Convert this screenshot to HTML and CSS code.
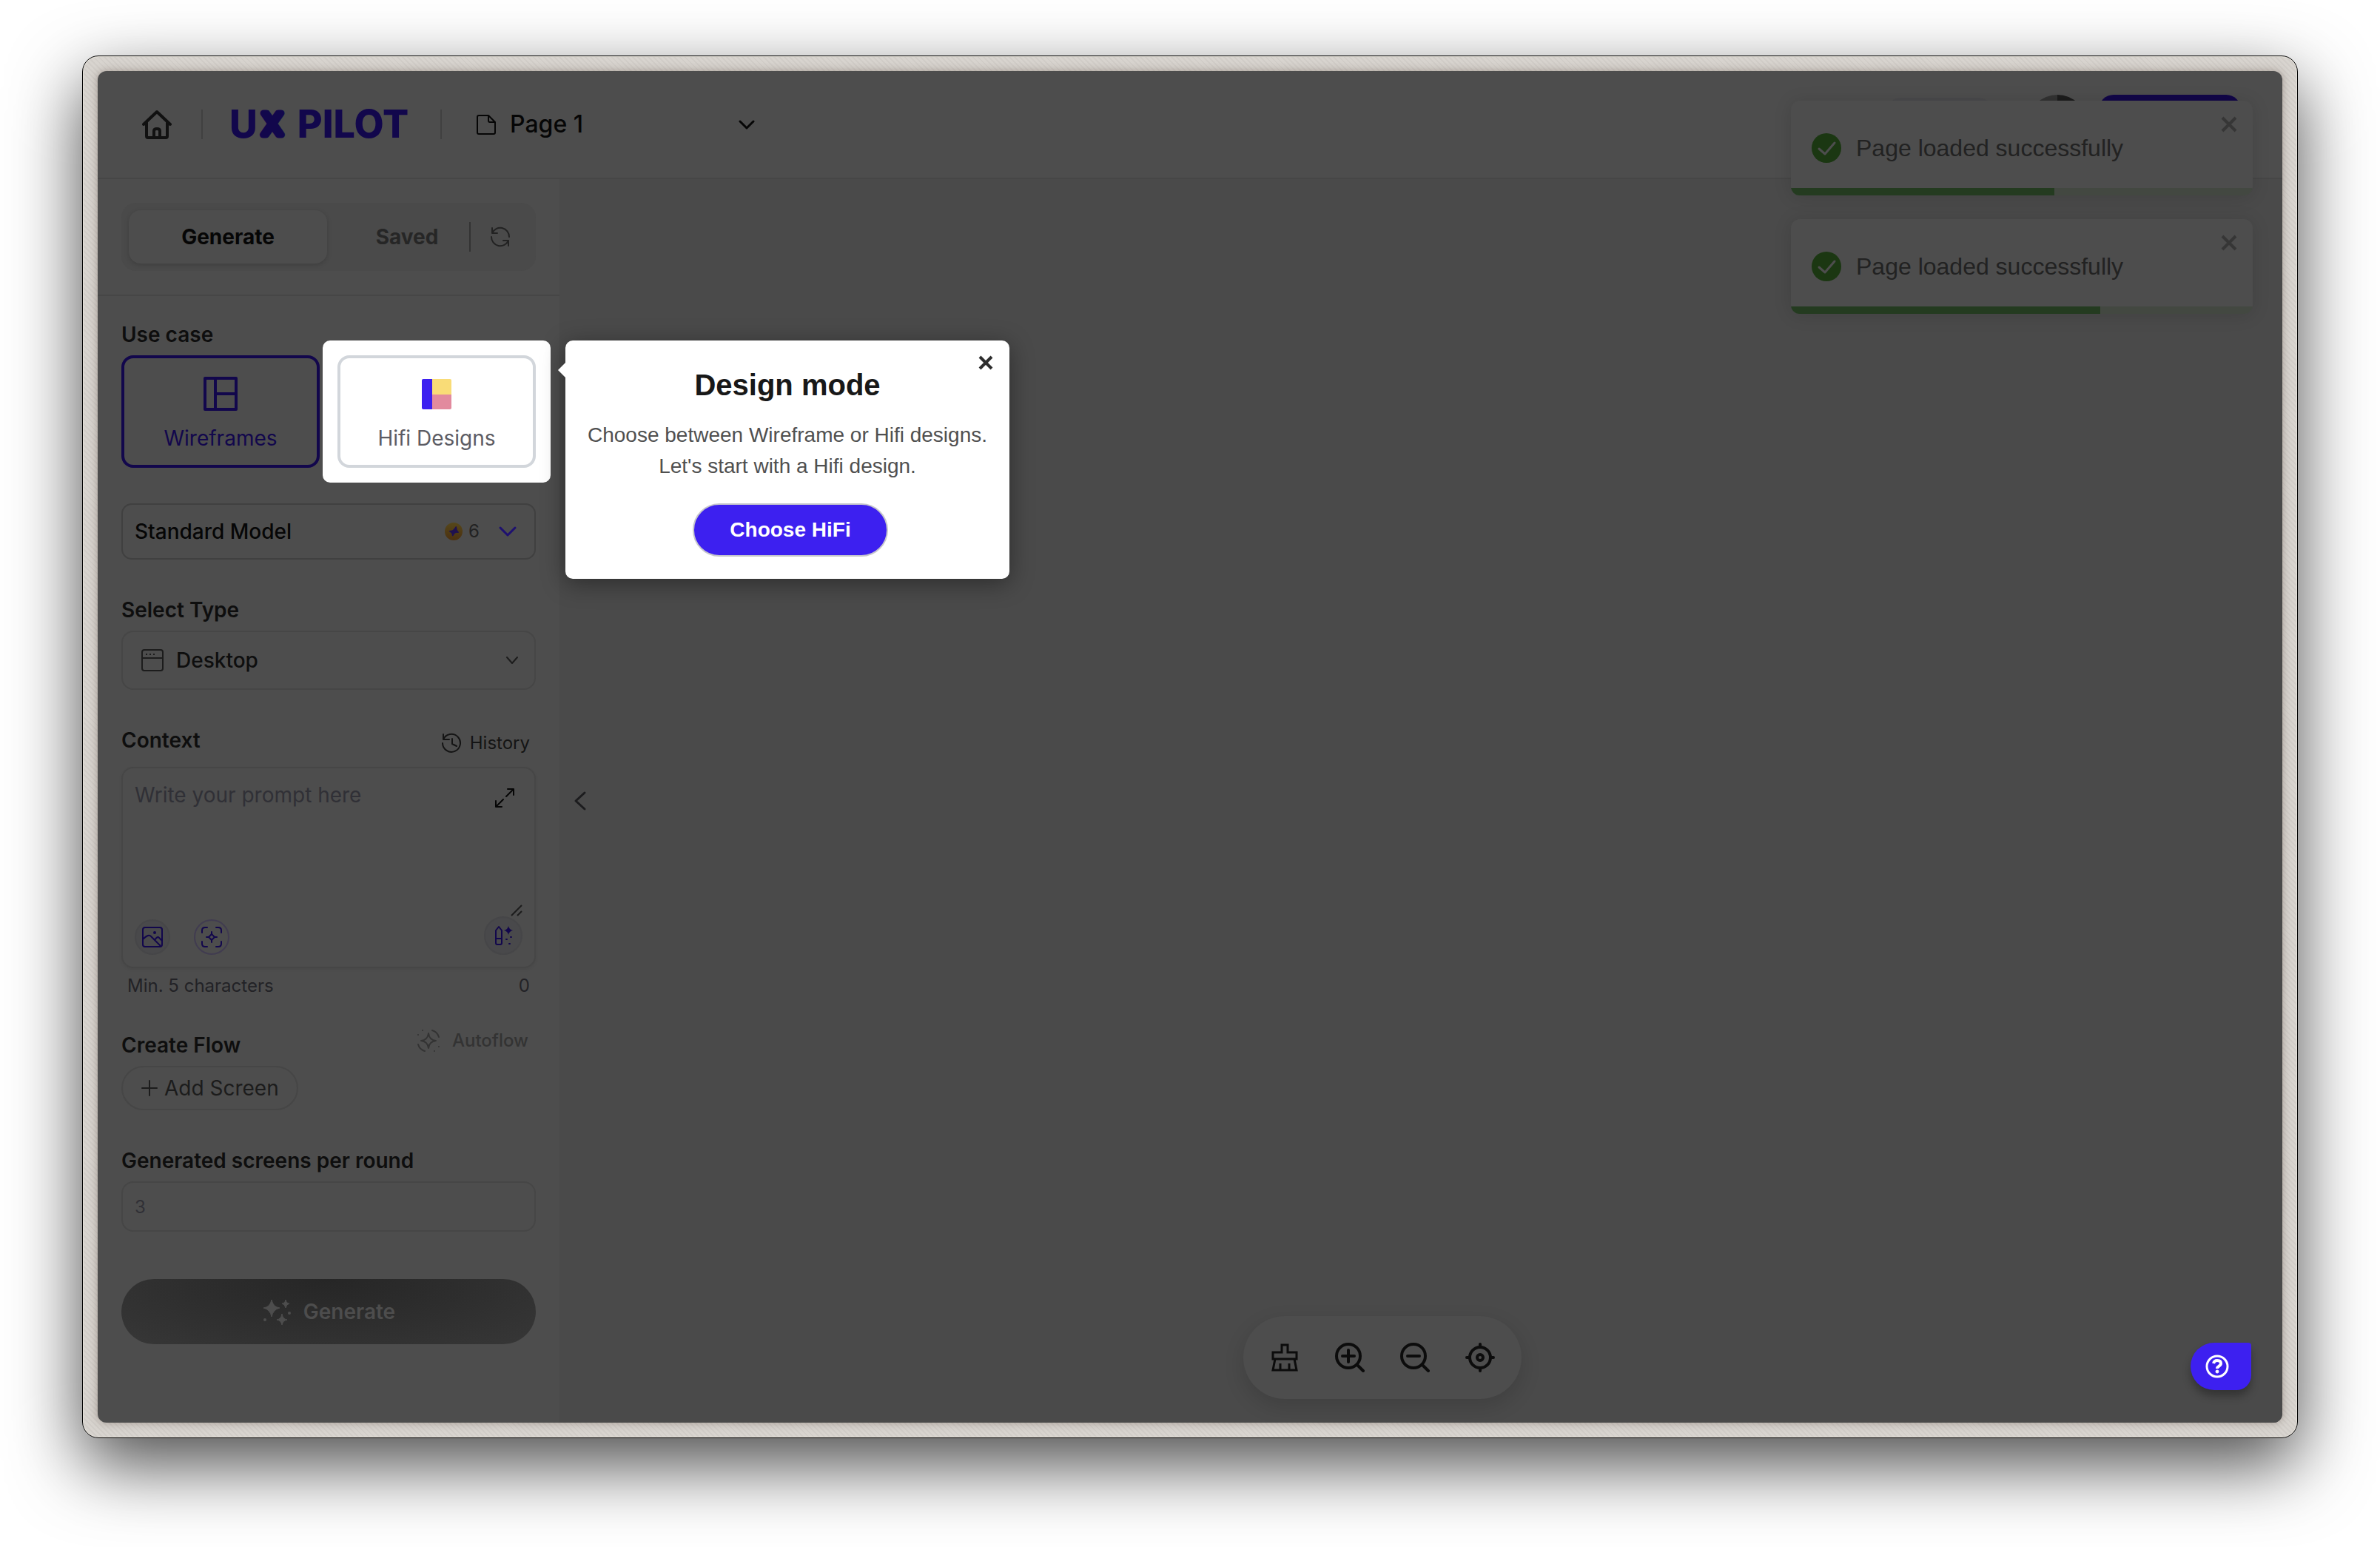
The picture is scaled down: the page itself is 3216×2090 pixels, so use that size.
FILE: index.html
```html
<!DOCTYPE html>
<html lang="en">
<head>
<meta charset="utf-8">
<title>UX Pilot</title>
<link rel="stylesheet" href="styles.css">
</head>
<body>
<div class="frame">
<div class="app">
  <header class="topbar">
    <a class="home" href="#" aria-label="Home">
      <svg width="40" height="40" viewBox="0 0 40 40" fill="none" stroke="currentColor" stroke-width="4" stroke-linejoin="round" stroke-linecap="round"><path d="M2 20 20 3l18 17M6 17v19q0 2 2 2h24q2 0 2-2V17M16 38V29q0-3 4-3t4 3v9"/></svg>
    </a>
    <span class="rule"></span>
    <a class="logo" href="#"><span>U</span><svg width="40" height="56" viewBox="0 0 40 56"><text class="logo-x" x="20" y="42" text-anchor="middle">X</text></svg><span class="logo-name">PILOT</span></a>
    <span class="rule"></span>
    <div class="page-picker">
      <svg width="32" height="32" viewBox="0 0 32 32" fill="none" stroke="currentColor" stroke-width="2" stroke-linejoin="round"><path d="M6 4h13l9 9v14q0 2-2 2H6q-2 0-2-2V6q0-2 2-2zM19 4v7q0 2 2 2h7"/></svg>
      <select aria-label="Page"><option>Page 1</option></select>
      <svg width="24" height="24" viewBox="0 0 24 24" fill="none" stroke="currentColor" stroke-width="3" stroke-linecap="round" stroke-linejoin="round"><path d="m3 8 9 9 9-9"/></svg>
    </div>
    <div class="account">
      <button class="credits" aria-label="Credits"></button>
      <span class="avatar"></span>
      <button class="upgrade" aria-label="Upgrade"></button>
    </div>
  </header>

  <div class="body">
    <aside class="sidebar">
      <div class="tabs-area">
        <div class="tabs">
          <button class="tab active">Generate</button>
          <button class="tab">Saved</button>
          <span class="tab-rule"></span>
          <button class="refresh" aria-label="Refresh">
            <svg width="28" height="28" viewBox="0 0 28 28" fill="none" stroke="currentColor" stroke-width="2" stroke-linecap="round" stroke-linejoin="round"><path d="M3 2v7h7M3 9A12 12 0 0 1 26 14M25 26v-7h-7M25 19A12 12 0 0 1 2 14"/></svg>
          </button>
        </div>
      </div>

      <form class="form">
        <section class="field">
          <h2 class="label">Use case</h2>
          <div class="modes">
            <button type="button" class="mode selected">
              <svg width="48" height="48" viewBox="0 0 48 48" fill="none" stroke="currentColor" stroke-width="4"><path d="M3 3h42v42H3zM17 3v42M17 24h28" stroke-linejoin="round"/></svg>
              Wireframes
            </button>
            <div class="spot">
              <button type="button" class="mode">
                <svg width="48" height="48" viewBox="0 0 48 48"><path fill="#3d20f0" d="M6 4h12v41H6q-2 0-2-2V6q0-2 2-2z"/><path fill="#f9dc77" d="M18 4h24q2 0 2 2v19H18z"/><path fill="#e28a9e" d="M18 25h26v18q0 2-2 2H18z"/></svg>
                Hifi Designs
              </button>
              <div class="popover" role="dialog" aria-labelledby="tour-title">
                <button type="button" class="popover-close" aria-label="Close"><svg width="20" height="20" viewBox="0 0 20 20" fill="none" stroke="currentColor" stroke-width="4"><path d="m2 2 16 16M18 2 2 18"/></svg></button>
                <h3 id="tour-title">Design mode</h3>
                <p>Choose between Wireframe or Hifi designs. Let's start with a Hifi design.</p>
                <button type="button" class="choose">Choose HiFi</button>
              </div>
            </div>
          </div>
        </section>

        <div class="picker model">
          <select aria-label="Model"><option>Standard Model</option></select>
          <span class="cost">
            <svg width="24" height="24" viewBox="0 0 24 24"><defs><linearGradient id="coin" x1="0" y1="0" x2="0" y2="1"><stop offset="0" stop-color="#55471a"/><stop offset="1" stop-color="#4c3010"/></linearGradient></defs><circle cx="12" cy="12" r="12" fill="url(#coin)"/><path fill="#1f1150" d="M15 5q1 0 1 1 0 4 3 7 0 1-1 1-4-1-6 3-1 2-2 1 0-4-4-6-1-1 0-1 3 0 5-1 2-2 4-5z"/></svg>
            6
          </span>
          <svg class="accent" width="28" height="28" viewBox="0 0 28 28" fill="none" stroke="currentColor" stroke-width="3" stroke-linecap="round" stroke-linejoin="round"><path d="m4 9 10 10L24 9"/></svg>
        </div>

        <div class="field">
          <label class="label" for="type">Select Type</label>
          <div class="picker type">
            <svg width="32" height="32" viewBox="0 0 32 32" fill="none" stroke="currentColor" stroke-width="2"><rect x="2" y="2" width="28" height="28" rx="3"/><path d="M2 13h28"/><path d="M7 8h2m3 0h2m3 0h2"/></svg>
            <select id="type"><option>Desktop</option></select>
            <svg width="20" height="20" viewBox="0 0 20 20" fill="none" stroke="currentColor" stroke-width="2" stroke-linecap="round" stroke-linejoin="round"><path d="m3 6 7 8 7-8"/></svg>
          </div>
        </div>

        <div class="field context">
          <div class="row bottom">
            <label class="label" for="prompt">Context</label>
            <button type="button" class="small-btn history">
              <svg width="28" height="28" viewBox="0 0 28 28" fill="none" stroke="currentColor" stroke-width="2" stroke-linecap="round" stroke-linejoin="round"><path d="M2 2v7h8M2 9a12 12 0 1 1-1 5M14 8v7l6 3"/></svg>
              History
            </button>
          </div>
          <div class="prompt">
            <div class="prompt-top">
              <textarea id="prompt" placeholder="Write your prompt here"></textarea>
              <div class="prompt-side">
                <button type="button" class="expand" aria-label="Expand"><svg width="28" height="28" viewBox="0 0 28 28" fill="none" stroke="currentColor" stroke-width="2" stroke-linecap="round" stroke-linejoin="round"><path d="M18 2h8v8M26 2 16 12M10 26H2v-8M2 26l10-10"/></svg></button>
                <svg width="16" height="16" viewBox="0 0 16 16" stroke="#1c1c1c" stroke-width="2"><path d="M1 15 15 1M9 15l6-6"/></svg>
              </div>
            </div>
            <div class="prompt-tools">
              <button type="button" class="round" aria-label="Add image"><svg width="28" height="28" viewBox="0 0 28 28" fill="none" stroke="currentColor" stroke-width="2" stroke-linejoin="round"><rect x="1" y="1" width="26" height="26" rx="3"/><path d="M1 17q8-8 11-4l13 13M17 18q4-6 6-3l4 4"/><circle cx="17" cy="8" r="1"/></svg></button>
              <button type="button" class="round outlined" aria-label="Scan"><svg width="28" height="28" viewBox="0 0 28 28" fill="none" stroke="currentColor" stroke-width="2" stroke-linecap="round"><path d="M1 8V5q0-4 4-4h3M20 1h3q4 0 4 4v3M27 20v3q0 4-4 4h-3M8 27H5q-4 0-4-4v-3M14 7v3m0 8v3M7 14h3m8 0h3"/><path d="m14 10 4 4-4 4-4-4z"/></svg></button>
              <button type="button" class="round magic" aria-label="Enhance prompt"><svg width="28" height="28" viewBox="0 0 28 28" fill="none" stroke="currentColor" stroke-width="2" stroke-linejoin="round"><path d="M4 7 8 2l4 5v17q0 2-2 2H6q-2 0-2-2zM4 18h8"/><path fill="currentColor" stroke="none" d="M21 1q1 5 6 6-5 1-6 6-1-5-6-6 5-1 6-6z"/><path stroke-linecap="round" d="M18 19h1M24 16h1M22 25h1"/></svg></button>
            </div>
          </div>
          <div class="row hint"><span>Min. 5 characters</span><span>0</span></div>
        </div>

        <section class="field flow">
          <div class="row">
            <h2 class="label">Create Flow</h2>
            <button type="button" class="small-btn autoflow">
              <svg width="32" height="28" viewBox="0 0 32 32" overflow="visible" preserveAspectRatio="xMidYMid slice" fill="none" stroke="currentColor" stroke-width="2" stroke-linecap="round" stroke-linejoin="round"><path d="M16 6q1 9 10 10-9 1-10 10-1-9-10-10 9-1 10-10zM21 2q7 2 9 9M2 21q2 7 9 9M2 8h0M8 2h0M30 24h0M24 30h0"/></svg>
              Autoflow
            </button>
          </div>
          <button type="button" class="add">
            <svg width="24" height="24" viewBox="0 0 24 24" stroke="currentColor" stroke-width="2" stroke-linecap="round"><path d="M2 12h20M12 2v20"/></svg>
            Add Screen
          </button>
        </section>

        <div class="field">
          <label class="label" for="count">Generated screens per round</label>
          <input class="count" id="count" type="text" placeholder="3">
        </div>

        <button type="button" class="generate">
          <svg width="40" height="40" viewBox="0 0 40 40" fill="currentColor"><path d="M13 4q2 10 11 11-9 2-11 12-2-10-11-12 9-1 11-11zM32 4q1 5 5 5-4 1-5 6-1-5-5-6 4 0 5-5zM27 23q1 7 7 8-6 1-7 7-1-6-7-7 6-1 7-8z" stroke="currentColor" stroke-width="1" stroke-linejoin="round"/><circle cx="4" cy="31" r="2"/><circle cx="37" cy="22" r="2"/></svg>
          Generate
        </button>
      </form>
    </aside>

    <main class="canvas">
      <button class="collapse" aria-label="Collapse sidebar"><svg width="32" height="32" viewBox="0 0 32 32" fill="none" stroke="currentColor" stroke-width="3" stroke-linecap="round" stroke-linejoin="round"><path d="M22 5 10 16l12 11"/></svg></button>
    </main>
  </div>

  <div class="toolbar">
    <button aria-label="Clean up"><svg width="40" height="40" viewBox="0 0 40 40" fill="none" stroke="currentColor" stroke-width="3"><path d="M4 22V13h12V3h8v10h12v9zM7 22 4 37h32l-3-15M14 28v9M26 28v9"/></svg></button>
    <button aria-label="Zoom in"><svg width="40" height="40" viewBox="0 0 40 40" fill="none" stroke="currentColor" stroke-width="4" stroke-linecap="round"><circle cx="18" cy="18" r="16"/><path d="m30 30 8 8M10 18h16M18 10v16"/></svg></button>
    <button aria-label="Zoom out"><svg width="40" height="40" viewBox="0 0 40 40" fill="none" stroke="currentColor" stroke-width="4" stroke-linecap="round"><circle cx="18" cy="18" r="16"/><path d="m30 30 8 8M10 18h16"/></svg></button>
    <button aria-label="Center view"><svg width="40" height="40" viewBox="0 0 40 40" fill="none" stroke="currentColor" stroke-width="4" stroke-linecap="round"><circle cx="20" cy="20" r="14"/><circle cx="20" cy="20" r="4"/><path d="M20 2v4m0 28v4M2 20h4m28 0h4"/></svg></button>
  </div>

  <button class="help" aria-label="Help"><svg width="32" height="32" viewBox="0 0 32 32" fill="none" stroke="#fff"><circle cx="16" cy="16" r="14" stroke-width="3"/><path d="M11 12q1-4 5-4 5 0 5 4 0 2-3 4-2 1-2 3" stroke-width="4"/><circle cx="16" cy="23" r="2" fill="#fff" stroke-width="1"/></svg></button>

  <div class="toasts">
    <div class="toast" role="status">
      <svg width="40" height="40" viewBox="0 0 40 40" fill="none"><circle cx="20" cy="20" r="20" fill="#1b3712"/><path d="m10 21 8 7 13-15" stroke="#4d4d4d" stroke-width="3" stroke-linecap="round" stroke-linejoin="round"/></svg>
      <span>Page loaded successfully</span>
      <button aria-label="Dismiss"><svg width="24" height="24" viewBox="0 0 24 24" stroke="currentColor" stroke-width="4"><path d="m3 3 18 18M21 3 3 21"/></svg></button>
      <div class="timer"><div style="width:57%"></div></div>
    </div>
    <div class="toast" role="status">
      <svg width="40" height="40" viewBox="0 0 40 40" fill="none"><circle cx="20" cy="20" r="20" fill="#1b3712"/><path d="m10 21 8 7 13-15" stroke="#4d4d4d" stroke-width="3" stroke-linecap="round" stroke-linejoin="round"/></svg>
      <span>Page loaded successfully</span>
      <button aria-label="Dismiss"><svg width="24" height="24" viewBox="0 0 24 24" stroke="currentColor" stroke-width="4"><path d="m3 3 18 18M21 3 3 21"/></svg></button>
      <div class="timer"><div style="width:67%"></div></div>
    </div>
  </div>
</div>
</div>
</body>
</html>
```
FILE: styles.css
```css
* { box-sizing: border-box; }

body {
  margin: 0;
  min-height: 100vh;
  padding: 75px 111px 147px;
  display: flex;
  background: #fff;
  font: 400 28px/40px Inter, "Liberation Sans", sans-serif;
  color: #0e0e0e;
}

h2, h3, p { margin: 0; }
a { color: inherit; text-decoration: none; }
svg { display: block; flex: none; }

button, select, input, textarea {
  font: inherit;
  color: inherit;
  background: none;
  border: 0;
  padding: 0;
  margin: 0;
}

select { appearance: none; outline: 0; }

.frame {
  flex: 1;
  display: flex;
  min-width: 0;
  padding: 20px;
  border: 1px solid #000;
  border-radius: 22px;
  background: repeating-linear-gradient(45deg, #d8d4cf 0 3px, #d1cdc8 3px 5px);
  box-shadow: inset 0 0 0 1px #e6e2da, 0 36px 96px rgba(0, 0, 0, .7);
}

.app {
  position: relative;
  flex: 1;
  min-width: 0;
  display: flex;
  flex-direction: column;
  border-radius: 12px;
  background: #4d4d4d;
  box-shadow: 0 0 12px rgba(60, 40, 30, .35);
}

/* Top bar */
.topbar {
  display: flex;
  align-items: center;
  gap: 36px;
  height: 146px;
  padding: 0 56px 0 56px;
  border-bottom: 2px solid #464646;
}

.home { padding: 0 4px; color: #111; }
.rule { width: 2px; height: 40px; background: #404040; }

.logo {
  display: flex;
  align-items: center;
  width: 249px;
  font-size: 52px;
  line-height: 56px;
  font-weight: 800;
  color: #12074c;
  white-space: nowrap;
}

.logo svg { overflow: visible; }

.logo-x {
  font-size: 40px;
  font-weight: 400;
  fill: #12074c;
  stroke: #12074c;
  stroke-width: 9px;
  stroke-linejoin: round;
}

.logo-name { margin-left: 14px; }

.page-picker {
  display: flex;
  align-items: center;
  gap: 16px;
  width: 388px;
  padding-left: 8px;
  font-size: 32px;
  font-weight: 500;
  color: #060606;
}

.page-picker select { flex: 1; min-width: 0; }

.account { display: flex; align-items: center; gap: 16px; margin-left: auto; }
.credits { width: 150px; height: 72px; margin-right: 28px; border-radius: 24px; background: #49494b; }
.avatar { width: 80px; height: 80px; border-radius: 50%; background: linear-gradient(90deg, #323232 50%, #1c1c1c 50%); }
.upgrade { width: 192px; height: 80px; border-radius: 20px; background: #110648; }

/* Sidebar */
.body { flex: 1; display: flex; }
.sidebar { width: 624px; flex: none; }
.tabs-area { padding: 32px; border-bottom: 2px solid #464646; }

.tabs {
  display: flex;
  align-items: center;
  height: 92px;
  padding: 10px;
  border-radius: 20px;
  background: #4a4a4a;
}

.tab { flex: none; width: 192px; height: 72px; font-weight: 700; color: #262626; padding-left: 24px; }
.tab.active {
  width: 268px;
  padding: 0;
  border-radius: 16px;
  color: #060606;
  background: #4d4d4d;
  box-shadow: 0 2px 6px rgba(0, 0, 0, .16);
}
.tab-rule { width: 2px; height: 40px; background: #333; }
.refresh { margin-left: 26px; color: #222; }

.form { display: flex; flex-direction: column; gap: 48px; padding: 32px 32px 0; }
.field { display: flex; flex-direction: column; gap: 8px; }
.label { font-size: 28px; line-height: 40px; font-weight: 600; color: #0e0e0e; }

.modes { display: grid; grid-template-columns: 1fr 1fr; gap: 24px; }
.mode {
  width: 100%;
  height: 152px;
  display: flex;
  flex-direction: column;
  align-items: center;
  justify-content: flex-end;
  gap: 16px;
  padding-bottom: 16px;
  border: 4px solid #d2d6db;
  border-radius: 16px;
  background: #fff;
  color: #5c5c64;
}
.mode.selected { border-color: #12074c; background: none; color: #12074c; }

.spot { position: relative; z-index: 1; }
.spot::before {
  content: "";
  position: absolute;
  inset: -20px;
  z-index: -1;
  border-radius: 10px;
  background: #fff;
}

.popover {
  position: absolute;
  top: -20px;
  left: calc(100% + 40px);
  width: 600px;
  padding: 32px 28px 30px;
  border-radius: 10px;
  background: #fff;
  box-shadow: 0 6px 32px rgba(0, 0, 0, .4);
  font-family: "Liberation Sans", Arial, sans-serif;
  line-height: 42px;
  text-align: center;
  color: #505050;
}
.popover::before {
  content: "";
  position: absolute;
  top: 30px;
  left: -10px;
  border: solid transparent;
  border-width: 10px 10px 10px 0;
  border-right-color: #fff;
}
.popover h3 { margin-bottom: 19px; font-size: 40px; line-height: 56px; font-weight: 700; color: #181818; }
.popover-close { position: absolute; top: 20px; right: 22px; color: #2d2d2d; }
.choose {
  height: 72px;
  margin: 29px 0 0 8px;
  padding: 0 48px;
  display: inline-block;
  vertical-align: top;
  border: 2px solid #c6c6cc;
  border-radius: 36px;
  background: #3d20f0;
  font-weight: 700;
  color: #fff;
}

.picker { display: flex; align-items: center; padding: 0 16px; border: 2px solid #404040; border-radius: 14px; font-weight: 500; }
.picker select { flex: 1; min-width: 0; }
.model { height: 76px; padding-right: 22px; color: #060606; }
.cost { display: flex; align-items: center; gap: 8px; margin-right: 24px; font-size: 24px; font-weight: 400; color: #222; }
.accent { color: #1e1070; }
.type { height: 80px; gap: 16px; padding: 0 20px 0 24px; border-color: #464646; border-radius: 16px; }
.type svg { color: #1c1c1c; }

.row { display: flex; justify-content: space-between; align-items: flex-start; }
.row.bottom { align-items: flex-end; }
.small-btn { display: flex; align-items: center; gap: 10px; font-size: 24px; line-height: 32px; }
.history { margin-right: 8px; color: #141414; }
.autoflow { gap: 16px; line-height: 28px; margin-right: 10px; font-weight: 500; color: #333; }

.context { gap: 16px; }
.prompt { padding: 16px; border: 2px solid #464646; border-radius: 16px; box-shadow: 0 2px 4px rgba(0, 0, 0, .06); }
.prompt-top { display: flex; height: 184px; }
.prompt-top textarea { flex: 1; min-width: 0; resize: none; outline: 0; }
.prompt-side { display: flex; flex-direction: column; justify-content: space-between; align-items: flex-end; }
.expand { width: 48px; height: 48px; display: grid; place-items: center; color: #060606; }
::placeholder { color: #303036; opacity: 1; }

.prompt-tools { display: flex; align-items: flex-end; gap: 32px; }
.round { width: 48px; height: 48px; display: grid; place-items: center; border: 2px solid #464648; border-radius: 50%; background: #49494b; color: #12074c; }
.round.outlined { border-color: #413c50; background: none; }
.round.magic { width: 52px; height: 52px; margin-left: auto; }

.hint { margin-top: -8px; padding: 0 8px; font-size: 24px; line-height: 32px; color: #222226; }

.flow { margin-top: -4px; }
.add {
  align-self: flex-start;
  display: flex;
  align-items: center;
  gap: 8px;
  height: 60px;
  padding: 0 24px;
  border: 2px solid #464646;
  border-radius: 30px;
  color: #1c1c1c;
}

.count { width: 100%; height: 68px; padding: 0 16px; border: 2px solid #464646; border-radius: 16px; font-size: 24px; }

.generate {
  display: flex;
  align-items: center;
  justify-content: center;
  gap: 16px;
  height: 88px;
  margin-top: 16px;
  border-radius: 44px;
  background: radial-gradient(ellipse at 50% 0, #262626, #2e2e2e 50%, #373737);
  font-weight: 600;
  color: #4d4d4d;
}

/* Canvas */
.canvas { flex: 1; display: flex; align-items: center; background: #4a4a4a; border-bottom-right-radius: 12px; }
.collapse { padding-left: 12px; color: #1c1c1e; }

.toolbar {
  position: absolute;
  left: calc(50% + 260px);
  bottom: 32px;
  transform: translateX(-50%);
  display: flex;
  gap: 48px;
  padding: 36px;
  border-radius: 56px;
  background: #4d4d4d;
  color: #0c0c0c;
  box-shadow: 0 10px 28px rgba(0, 0, 0, .14);
}

.help {
  position: absolute;
  right: 42px;
  bottom: 44px;
  width: 82px;
  height: 64px;
  padding-left: 20px;
  border-radius: 32px 4px 20px 32px;
  background: #3d20f0;
  box-shadow: 0 8px 12px rgba(0, 0, 0, .3);
}

/* Notifications */
.toasts { position: absolute; top: 40px; right: 40px; display: flex; flex-direction: column; gap: 32px; }
.toast {
  position: relative;
  display: flex;
  align-items: center;
  gap: 20px;
  width: 624px;
  height: 128px;
  padding: 0 20px 0 28px;
  overflow: hidden;
  border-radius: 12px;
  background: #4d4d4d;
  box-shadow: 0 2px 24px rgba(0, 0, 0, .12);
  font: 400 32px/40px "Liberation Sans", Arial, sans-serif;
  color: #222;
}
.toast button { align-self: flex-start; margin: 20px 0 0 auto; color: #363636; }
.timer { position: absolute; left: 0; right: 0; bottom: 0; height: 10px; background: #434841; }
.timer div { height: 100%; background: #243b20; }
```
